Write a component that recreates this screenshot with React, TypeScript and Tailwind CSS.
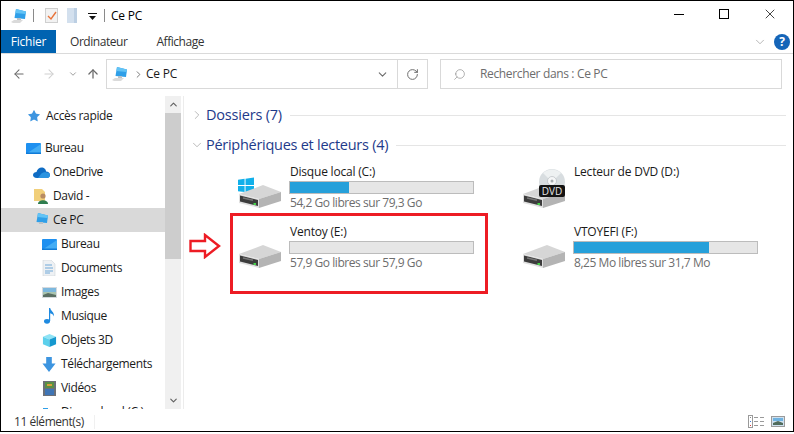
import { ChevronDown, ChevronRight, ChevronUp, RotateCw, Search, ArrowLeft, ArrowRight, ArrowUp, Star, X } from 'lucide-react'

const font = { fontFamily: '"Open Sans", "Noto Sans", sans-serif' }

function PcIcon({ size = 16 }: { size?: number }) {
  return (
    <svg width={size} height={size} viewBox="0 0 16 16" className="shrink-0">
      <path d="M5 1 L15 3.5 L14 11 L3.5 10 Z" fill="#2f9fe8" />
      <path d="M5 1 L15 3.5 L14.6 6 L4.4 5 Z" fill="#62c3f5" />
      <path d="M6 10 H10 V12 H6 Z" fill="#b9c2c9" />
      <path d="M0 14 L3 12 H12 L9 15 H2 Z" fill="#dadada" />
    </svg>
  )
}

function DesktopIcon() {
  return (
    <svg width="15" height="11" viewBox="0 0 15 11" className="shrink-0">
      <rect width="15" height="11" rx="1" fill="#1e90f0" />
      <path d="M0 11 L15 1 V11 Z" fill="#43adf5" />
      <rect y="9.5" width="15" height="1.5" fill="#0f7bd8" />
    </svg>
  )
}

function CloudIcon() {
  return (
    <svg width="17" height="11" viewBox="0 0 17 11" className="shrink-0">
      <path d="M4 11 C1 11 0 9 0 8 C0 6 2 5 3.5 5 C4 2 7 0 9.5 0.5 C11.5 1 13 2.5 13 4.5 C15.5 4.5 17 6 17 8 C17 10 15.5 11 14 11 Z" fill="#0f6cc4" />
      <path d="M5 11 L8 7 C9 5.5 12 5 13.5 5.5 C15.5 5.5 17 6.5 17 8 C17 10 15.5 11 14 11 Z" fill="#2b93e0" />
    </svg>
  )
}

function MusicIcon() {
  return (
    <svg width="11" height="16" viewBox="0 0 11 16" className="shrink-0">
      <ellipse cx="3" cy="13.3" rx="3" ry="2.4" fill="#1f8ae0" />
      <path d="M5 13 V0 H6.2 C6.6 3 10.5 4 10 8.5 C9.4 6.5 7.8 5.6 6.2 5.2 V13 Z" fill="#1f8ae0" />
    </svg>
  )
}

function DocIcon() {
  return (
    <svg width="14" height="16" viewBox="0 0 14 16" className="shrink-0">
      <path d="M1 0 H9 L13 4 V16 H1 Z" fill="#eef1f4" stroke="#c6ccd2" strokeWidth="0.5" />
      <path d="M3 5 H10 M3 8 H11 M3 11 H11 M3 13 H8" stroke="#6fa8d8" strokeWidth="1" />
    </svg>
  )
}

function ImageIcon() {
  return (
    <svg width="15" height="11" viewBox="0 0 15 11" className="shrink-0">
      <rect width="15" height="11" fill="#d5dade" />
      <rect x="1" y="1" width="13" height="4" fill="#7db8de" />
      <rect x="1" y="5" width="13" height="5" fill="#a9c4b0" />
      <path d="M1 8 L6 6 L14 8 V10 H1 Z" fill="#5a6f63" />
    </svg>
  )
}

function CubeIcon() {
  return (
    <svg width="15" height="15" viewBox="0 0 16 16" className="shrink-0">
      <path d="M1 4 L8 1 L15 4 L8 7 Z" fill="#8fe3f5" />
      <path d="M1 4 L8 7 V15 L1 12 Z" fill="#5cd0ec" />
      <path d="M15 4 L8 7 V15 L15 12 Z" fill="#1598cf" />
    </svg>
  )
}

function DownloadIcon() {
  return (
    <svg width="14" height="15" viewBox="0 0 14 16" className="shrink-0">
      <path d="M4 0 H10 V7 H14 L7 16 L0 7 H4 Z" fill="#3d95e0" />
    </svg>
  )
}

function VideoIcon() {
  return (
    <svg width="13" height="15" viewBox="0 0 13 15" className="shrink-0">
      <rect width="13" height="15" fill="#6c7078" />
      <rect x="2" y="1" width="9" height="6" fill="#5a8f45" />
      <rect x="2" y="8" width="9" height="6" fill="#3f75b5" />
      <path d="M4 3 H9 V5 H4 Z" fill="#d9a13a" />
    </svg>
  )
}

function UserFolderIcon() {
  return (
    <svg width="15" height="16" viewBox="0 0 15 16" className="shrink-0">
      <path d="M0 1 H8 L11 4 V13 H0 Z" fill="#f1cf7a" />
      <circle cx="9" cy="8" r="2.6" fill="#b88b62" />
      <path d="M4 16 C4 11 14 11 14 16 Z" fill="#2f7d4f" />
    </svg>
  )
}

function LocalDiskSmallIcon() {
  return (
    <svg width="16" height="16" viewBox="0 0 16 16" className="shrink-0">
      <path d="M2 4 H7 V8 H2 Z" fill="#2f9fe8" />
      <path d="M2 10 L10 8 L15 10 V14 L8 15 L2 13 Z" fill="#c9c9c9" />
    </svg>
  )
}

function HddIcon({ dvd, windows }: { dvd?: boolean; windows?: boolean }) {
  return (
    <div className="relative h-[36px] w-[44px] shrink-0">
      {windows && (
        <svg width="16" height="17" viewBox="0 0 17 17" className="absolute left-0 top-[5px]">
          <path d="M0 2.5 L7 1.4 V8 H0 Z M8 1.2 L17 0 V8 H8 Z M0 9 H7 V15.5 L0 14.5 Z M8 9 H17 V17 L8 15.8 Z" fill="#12b0ea" />
        </svg>
      )}
      {dvd && (
        <svg width="26" height="20" viewBox="0 0 26 20" className="absolute left-[17px] top-[-3px]">
          <circle cx="13" cy="13" r="13" fill="#d8dde0" />
          <path d="M13 13 L4 4 A13 13 0 0 1 22 4 Z" fill="#eef1f2" />
          <circle cx="13" cy="12" r="4.5" fill="#f5f6f7" stroke="#b0b5b8" strokeWidth="0.6" />
          <circle cx="13" cy="12" r="1.5" fill="#a9aeb1" />
        </svg>
      )}
      <svg width="44" height="24" viewBox="0 0 44 24" className="absolute bottom-0 left-0">
        <path d="M1 10 L25 1 L43 8 L21 15 Z" fill="#d6d6d6" />
        <path d="M21 15 L43 8 V17 L21 24 Z" fill="#b4b4b4" />
        <path d="M1 10 L21 15 V24 L1 19 Z" fill="#e0e0e0" />
        <path d="M2 11.5 L20 16 V22 L2 17.5 Z" fill="#3c3c3c" />
        <path d="M5 14 L15 16.3" stroke="#777" strokeWidth="1.4" />
        <rect x="15.5" y="19" width="2.5" height="2" fill="#46d34a" />
      </svg>
      {dvd && (
        <div className="absolute left-[17px] top-[13px] flex h-[12px] w-[26px] items-center justify-center rounded-[2px] bg-[#141414] text-[10px] leading-none text-[#e6e6e6]">
          DVD
        </div>
      )}
    </div>
  )
}

function NavItem({ label, indent, icon, selected }: { label: string; indent: string; icon: React.ReactNode; selected?: boolean }) {
  return (
    <div className={`flex h-[24px] shrink-0 items-center ${indent} ${selected ? 'bg-[#d9d9d9]' : ''}`}>
      <div className="flex w-[20px] shrink-0 items-center justify-center">{icon}</div>
      <span className="ml-[2px] whitespace-nowrap text-[12px] tracking-[-0.35px] text-[#1a1a1a]">{label}</span>
    </div>
  )
}

function DriveTile({ name, free, used, dvd, windows }: { name: string; free?: string; used?: number; dvd?: boolean; windows?: boolean }) {
  return (
    <div className="flex h-[60px] gap-[7px] pl-[7px] pt-[3px]">
      <div className="flex h-[45px] items-end">
        <HddIcon dvd={dvd} windows={windows} />
      </div>
      <div className="flex w-[185px] flex-col">
        <span className="h-[18px] pl-[1px] text-[12px] leading-[18px] tracking-[-0.2px] text-[#1a1a1a]">{name}</span>
        {free && (
          <>
            <div className="h-[13px] w-[185px] border border-[#bcbcbc] bg-[#e6e6e6]">
              {used !== undefined && used > 0 && <div className="h-full bg-[#26a0da]" style={{ width: `${used}%` }} />}
            </div>
            <span className="mt-[1px] pl-[1px] text-[12px] leading-[15px] tracking-[-0.45px] text-[#6d6d6d]">{free}</span>
          </>
        )}
      </div>
    </div>
  )
}

export default function App() {
  return (
    <div className="h-[432px] w-[794px] overflow-hidden border border-black bg-white" style={font}>
      <div className="relative flex h-full flex-col">
        {/* barre de titre */}
        <div className="flex h-[29px] shrink-0 items-center pl-[10px]">
          <PcIcon />
          <div className="ml-[6px] h-[13px] w-px bg-[#8a8a8a]" />
          <svg width="13" height="15" viewBox="0 0 13 15" className="ml-[11px]">
            <rect x="0.5" y="0.5" width="12" height="14" fill="#f2f2f2" stroke="#cfcfcf" />
            <path d="M3 8 L6 11 L11 4" fill="none" stroke="#e8743b" strokeWidth="1.4" />
          </svg>
          <svg width="11" height="15" viewBox="0 0 11 15" className="ml-[9px]">
            <path d="M0 0 H10 V15 H0 Z" fill="#d3e0ee" />
            <path d="M7 0 H10 V15 H7 Z" fill="#bccfe3" />
          </svg>
          <svg width="9" height="7" viewBox="0 0 9 7" className="ml-[10px] mt-[2px]">
            <path d="M0 0 H9 V1 H0 Z M1 3 H8 L4.5 7 Z" fill="#111" />
          </svg>
          <div className="ml-[7px] h-[13px] w-px bg-[#8a8a8a]" />
          <span className="ml-[6px] text-[12px] tracking-[-0.2px] text-black">Ce PC</span>
          <div className="mb-[3px] ml-auto flex items-center">
            <div className="h-px w-[10px] bg-black" />
            <div className="ml-[35px] h-[10px] w-[10px] border border-black" />
            <X size={16} strokeWidth={1.1} className="ml-[33px] mr-[15px] text-black" />
          </div>
        </div>

        {/* onglets */}
        <div className="flex h-[24px] shrink-0 items-stretch border-b border-[#dadada]">
          <div className="flex w-[55px] items-center justify-center bg-[#0063b1] text-[12px] tracking-[-0.2px] text-white">Fichier</div>
          <span className="ml-[14px] flex items-center text-[12px] tracking-[-0.45px] text-[#333]">Ordinateur</span>
          <span className="ml-[29px] flex items-center text-[12px] tracking-[-0.45px] text-[#333]">Affichage</span>
          <div className="ml-auto flex items-center pr-[3px]">
            <ChevronDown size={14} strokeWidth={1.2} className="mr-[7px] text-[#9a9a9a]" />
            <div className="flex h-[16px] w-[16px] items-center justify-center rounded-full bg-[#1565b8] text-[12px] font-bold leading-none text-white">?</div>
          </div>
        </div>

        {/* navigation */}
        <div className="flex h-[42px] shrink-0 items-start pt-[5px]">
          <div className="flex h-[30px] w-[105px] shrink-0 items-center pl-[11px]">
            <ArrowLeft size={14} strokeWidth={1.8} className="text-[#6b6b6b]" />
            <ArrowRight size={14} strokeWidth={1.8} className="ml-[16px] text-[#cfcfcf]" />
            <ChevronDown size={10} strokeWidth={2} className="ml-[12px] text-[#8a8a8a]" />
            <ArrowUp size={14} strokeWidth={2.2} className="ml-[8px] text-[#6b6b6b]" />
          </div>
          <div className="flex h-[30px] w-[322px] shrink-0 items-center border border-[#d9d9d9] pl-[5px]">
            <PcIcon />
            <ChevronRight size={11} strokeWidth={2} className="ml-[5px] text-[#707070]" />
            <span className="ml-[2px] text-[12px] tracking-[-0.2px] text-[#1a1a1a]">Ce PC</span>
            <ChevronDown size={13} strokeWidth={2} className="ml-auto mr-[8px] text-[#6b6b6b]" />
            <div className="flex h-full w-[30px] items-center justify-center border-l border-[#d9d9d9]">
              <RotateCw size={13} strokeWidth={1.8} className="text-[#6b6b6b]" />
            </div>
          </div>
          <div className="ml-[12px] flex h-[30px] w-[342px] shrink-0 items-center border border-[#d9d9d9] pl-[12px]">
            <Search size={13} strokeWidth={1.2} className="-scale-x-100 text-[#8a8a8a]" />
            <span className="ml-[14px] text-[12px] tracking-[-0.35px] text-[#6d6d6d]">Rechercher dans : Ce PC</span>
          </div>
        </div>

        {/* contenu */}
        <div className="flex min-h-0 flex-1">
          <div className="flex w-[164px] shrink-0 flex-col overflow-hidden pt-[8px]">
            <NavItem label="Accès rapide" indent="pl-[23px]" icon={<Star size={14} fill="#3d95e0" strokeWidth={0} />} />
            <div className="h-[8px] shrink-0" />
            <NavItem label="Bureau" indent="pl-[22px]" icon={<DesktopIcon />} />
            <NavItem label="OneDrive" indent="pl-[30px]" icon={<CloudIcon />} />
            <NavItem label="David -" indent="pl-[30px]" icon={<UserFolderIcon />} />
            <NavItem label="Ce PC" indent="pl-[30px]" icon={<PcIcon />} selected />
            <NavItem label="Bureau" indent="pl-[38px]" icon={<DesktopIcon />} />
            <NavItem label="Documents" indent="pl-[38px]" icon={<DocIcon />} />
            <NavItem label="Images" indent="pl-[38px]" icon={<ImageIcon />} />
            <NavItem label="Musique" indent="pl-[38px]" icon={<MusicIcon />} />
            <NavItem label="Objets 3D" indent="pl-[38px]" icon={<CubeIcon />} />
            <NavItem label="Téléchargements" indent="pl-[38px]" icon={<DownloadIcon />} />
            <NavItem label="Vidéos" indent="pl-[38px]" icon={<VideoIcon />} />
            <NavItem label="Disque local (C:)" indent="pl-[38px]" icon={<LocalDiskSmallIcon />} />
          </div>

          {/* barre de défilement */}
          <div className="flex w-[16px] shrink-0 flex-col bg-[#f0f0f0]">
            <div className="flex h-[17px] shrink-0 items-center justify-center">
              <ChevronUp size={11} strokeWidth={2.5} className="text-[#606060]" />
            </div>
            <div className="h-[146px] shrink-0 bg-[#cdcdcd]" />
            <div className="mt-auto flex h-[17px] shrink-0 items-center justify-center">
              <ChevronDown size={11} strokeWidth={2.5} className="text-[#606060]" />
            </div>
          </div>

          <div className="ml-[2px] w-px shrink-0 bg-[#ececec]" />

          <div className="min-w-0 flex-1 pl-[6px] pt-[8px]">
            <div className="flex h-[22px] items-center">
              <ChevronRight size={14} strokeWidth={1} className="text-[#8a8a8a]" />
              <span className="ml-[2px] text-[14.5px] tracking-[-0.2px] text-[#1e3a8a]">Dossiers (7)</span>
              <div className="ml-[8px] mr-[7px] h-px flex-1 bg-[#e5e5e5]" />
            </div>
            <div className="mt-[8px] flex h-[22px] items-center">
              <ChevronDown size={14} strokeWidth={1} className="text-[#8a8a8a]" />
              <span className="ml-[2px] text-[14.5px] tracking-[-0.27px] text-[#1e3a8a]">Périphériques et lecteurs (4)</span>
              <div className="ml-[8px] mr-[7px] h-px flex-1 bg-[#e5e5e5]" />
            </div>
            <div className="ml-[41px] mt-[4px] grid grid-cols-[284px_284px]">
              <DriveTile name="Disque local (C:)" free="54,2 Go libres sur 79,3 Go" used={32.5} windows />
              <DriveTile name="Lecteur de DVD (D:)" dvd />
              <DriveTile name="Ventoy (E:)" free="57,9 Go libres sur 57,9 Go" used={0} />
              <DriveTile name="VTOYEFI (F:)" free="8,25 Mo libres sur 31,7 Mo" used={74} />
            </div>
          </div>
        </div>

        {/* barre d'état */}
        <div className="flex h-[22px] shrink-0 items-center bg-white pl-[13px] pt-[3px]">
          <span className="text-[12px] tracking-[-0.45px] text-[#333]">11 élément(s)</span>
          <div className="ml-[10px] h-[14px] w-px bg-[#f0f0f0]" />
          <div className="ml-auto flex items-center pr-[8px]">
            <svg width="16" height="13" viewBox="0 0 16 13">
              <rect x="0.5" y="0.5" width="4" height="12" fill="#fff" stroke="#9a9a9a" />
              <rect x="2" y="2" width="1" height="1" fill="#888" />
              <rect x="2" y="6" width="1" height="1" fill="#3d7fd9" />
              <rect x="2" y="10" width="1" height="1" fill="#d93d3d" />
              <path d="M6 2.5 H10 M12 2.5 H16 M6 6.5 H10 M12 6.5 H16 M6 10.5 H10 M12 10.5 H16" stroke="#9a9a9a" />
            </svg>
            <svg width="14" height="11" viewBox="0 0 14 11" className="ml-[7px]">
              <rect x="0.5" y="0.5" width="13" height="10" fill="#cfe0ee" stroke="#9a9a9a" />
              <rect x="2" y="2" width="10" height="3" fill="#6fb2e0" />
              <path d="M2 7 L7 5 L12 7 V9 H2 Z" fill="#4f6b5c" />
            </svg>
          </div>
        </div>

        {/* annotation */}
        <div className="absolute left-[229px] top-[212px] h-[81px] w-[258px] border-[3px] border-[#ed1c24]" />
        <svg width="32" height="26" viewBox="0 0 32 26" className="absolute left-[188px] top-[232px]">
          <path d="M1.5 8 H16 V2 L30 13 L16 24 V18 H1.5 Z" fill="#fff" stroke="#ed1c24" strokeWidth="2.4" />
        </svg>
      </div>
    </div>
  )
}
